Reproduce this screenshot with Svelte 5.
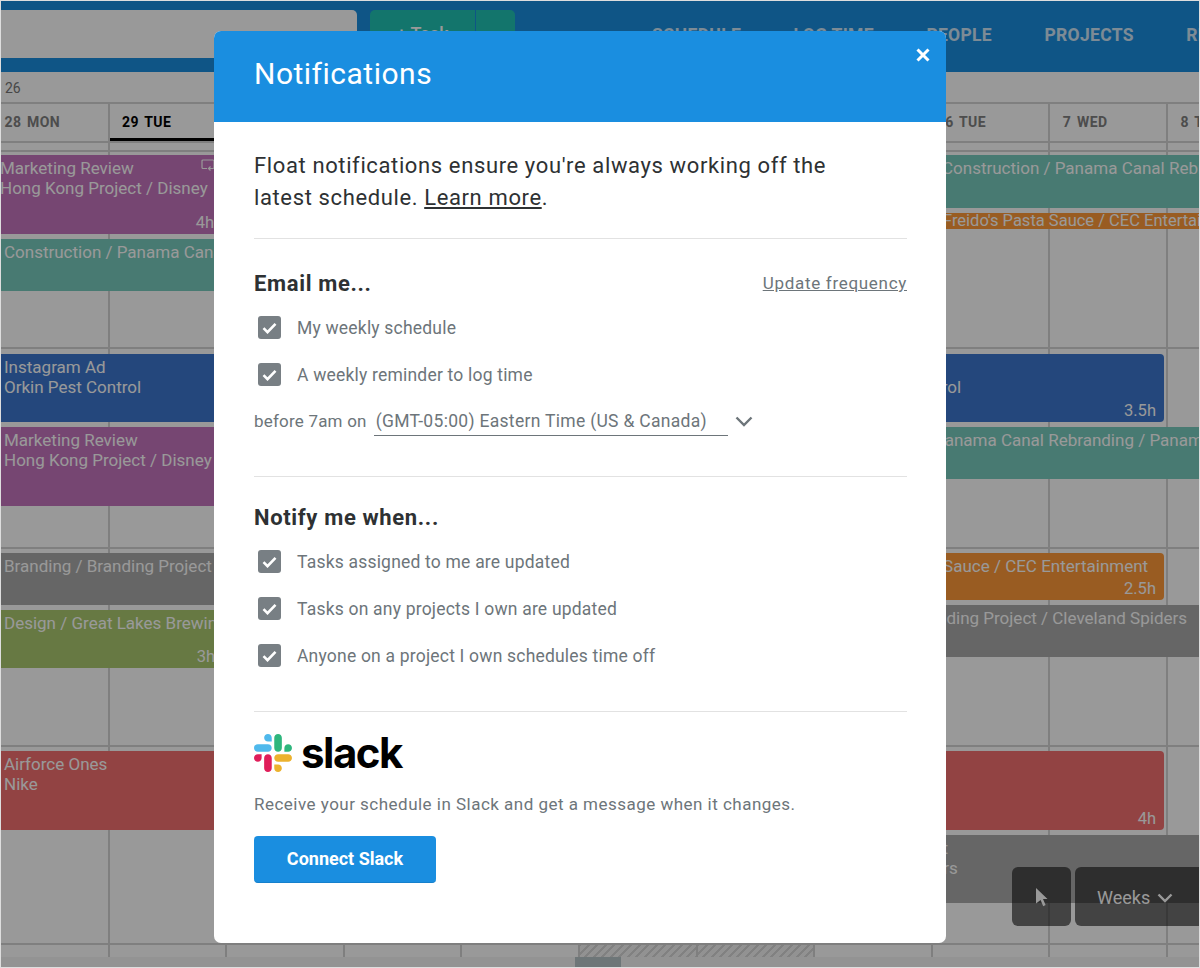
<script>
  const days = ['28 MON', '29 TUE', '30 WED', '1 THU', '2 FRI', '3 SAT', '4 SUN', '5 MON', '6 TUE', '7 WED', '8 THU'];
  const rows = [197, 200, 198, 198];

  // x, y, w, h in page pixels, the board content starts at y 152
  const tasks = [
    { x: 0, y: 155, w: 330, h: 79, c: 'purple', pad: 0, lines: ['Marketing Review', 'Hong Kong Project / Disney'], time: '4h', timeX: 214 },
    { x: 0, y: 239, w: 330, h: 52, c: 'teal', pad: 4, lines: ['Construction / Panama Canal Rebranding'] },
    { x: 0, y: 354, w: 400, h: 68, c: 'blue', pad: 4, lines: ['Instagram Ad', 'Orkin Pest Control'] },
    { x: 0, y: 427, w: 330, h: 79, c: 'purple', pad: 4, lines: ['Marketing Review', 'Hong Kong Project / Disney'] },
    { x: 0, y: 553, w: 330, h: 52, c: 'gray', pad: 4, lines: ['Branding / Branding Project / Cleveland'] },
    { x: 0, y: 610, w: 330, h: 58, c: 'green', pad: 4, lines: ['Design / Great Lakes Brewing Co'], time: '3h', timeX: 215 },
    { x: 0, y: 751, w: 330, h: 79, c: 'red', pad: 4, lines: ['Airforce Ones', 'Nike'] },
    { x: 930, y: 155, w: 270, h: 53, c: 'teal', pad: 12, lines: ['Construction / Panama Canal Rebranding'] },
    { x: 930, y: 213, w: 270, h: 16, c: 'orange', pad: 13, lines: ["Freido's Pasta Sauce / CEC Entertainment"], small: true },
    { x: 800, y: 354, w: 364, h: 68, c: 'blue', end: true, pad: 24, lines: ['', 'Orkin Pest Control'], time: '3.5h', timeX: 1156 },
    { x: 800, y: 427, w: 400, h: 52, c: 'teal', pad: 134, lines: ['Panama Canal Rebranding / Panama Canal'] },
    { x: 800, y: 553, w: 364, h: 47, c: 'orange', end: true, pad: 34, lines: ["Freido's Pasta Sauce / CEC Entertainment"], time: '2.5h', timeX: 1156 },
    { x: 800, y: 605, w: 400, h: 52, c: 'gray', pad: 29, lines: ['Branding / Branding Project / Cleveland Spiders'] },
    { x: 800, y: 751, w: 364, h: 79, c: 'red', end: true, pad: 4, lines: ['Airforce Ones', 'Nike'], time: '4h', timeX: 1156 },
    { x: 800, y: 835, w: 400, h: 68, c: 'gray', pad: 23, lines: ['Branding Project', 'Cleveland Spiders'] }
  ];

  const emailItems = ['My weekly schedule', 'A weekly reminder to log time'];
  const notifyItems = [
    'Tasks assigned to me are updated',
    'Tasks on any projects I own are updated',
    'Anyone on a project I own schedules time off'
  ];
</script>

<div class="page">
  <header class="topbar">
    <div class="search"></div>
    <div class="add">
      <span class="add-main">+ Task</span>
      <span class="add-more"></span>
    </div>
    <nav class="nav">
      <span>SCHEDULE</span>
      <span>LOG TIME</span>
      <span>PEOPLE</span>
      <span>PROJECTS</span>
      <span>REPORT</span>
    </nav>
  </header>

  <div class="months">26</div>

  <div class="days">
    {#each days as d, i}
      <div class="day" class:active={i === 1}>{d}</div>
    {/each}
  </div>

  <div class="spacer">
    {#each days as d}<i></i>{/each}
  </div>

  <div class="board">
    <div class="cols">
      {#each days as d, i}
        <div class="col" class:off={i === 5 || i === 6}></div>
      {/each}
    </div>
    <div class="rows">
      {#each rows as h}
        <div class="row" style="height:{h}px"></div>
      {/each}
    </div>

    {#each tasks as t}
      <div
        class="task {t.c}"
        class:end={t.end}
        style="left:{t.x - 1}px;top:{t.y - 152}px;width:{t.w}px;height:{t.h}px;padding-left:{t.pad}px"
      >
        {#each t.lines as line}
          <div class="line" class:small={t.small}>{line || '\u00a0'}</div>
        {/each}
        {#if t.time}
          <span class="time" style="left:{t.timeX - t.x - 60}px">{t.time}</span>
        {/if}
      </div>
    {/each}

    <svg class="repeat" width="14" height="13" viewBox="0 0 14 13" fill="none" stroke="#fff" stroke-width="1.2">
      <path d="M6 9.5H2a1 1 0 0 1-1-1V2a1 1 0 0 1 1-1h10a1 1 0 0 1 1 1v6.5a1 1 0 0 1-1 1H7.5" />
      <path d="M9.5 7.5l-2 2 2 2" />
    </svg>
  </div>

  <div class="scrollbar"><span></span></div>

  <div class="tools">
    <div class="tool pointer">
      <svg width="12" height="19" viewBox="0 0 12 19"><path d="M0 0l11.5 11H7l2.6 6-2.4 1.2L4.6 12 0 15.5z" fill="#fff" /></svg>
    </div>
    <div class="tool weeks">
      Weeks
      <svg width="16" height="10" viewBox="0 0 16 10" fill="none" stroke="#fff" stroke-width="2.4"><path d="M1.5 1.5L8 8l6.5-6.5" /></svg>
    </div>
  </div>

  <div class="overlay"></div>

  <section class="modal">
    <div class="modal-head">
      <h1>Notifications</h1>
      <svg class="close" width="14" height="14" viewBox="0 0 14 14" stroke="#fff" stroke-width="3"><path d="M1.5 1.5l11 11M12.5 1.5l-11 11" /></svg>
    </div>

    <div class="modal-body">
      <p class="intro">Float notifications ensure you're always working off the latest schedule. <u>Learn more</u>.</p>

      <hr />

      <div class="title-row">
        <h2>Email me...</h2>
        <span class="freq">Update frequency</span>
      </div>
      <ul class="checks">
        {#each emailItems as item}
          <li>
            <span class="box"><svg width="15" height="12" viewBox="0 0 15 12" fill="none" stroke="#fff" stroke-width="2.6"><path d="M1.5 6.2l4 4 8-8.4" /></svg></span>
            {item}
          </li>
        {/each}
      </ul>
      <div class="before">
        <span>before 7am on</span>
        <span class="zone">(GMT-05:00) Eastern Time (US &amp; Canada)</span>
        <svg width="18" height="11" viewBox="0 0 18 11" fill="none" stroke="#6d757a" stroke-width="2.4"><path d="M1.5 1.5L9 9l7.5-7.5" /></svg>
      </div>

      <hr class="gap" />

      <h2 class="notify">Notify me when...</h2>
      <ul class="checks">
        {#each notifyItems as item}
          <li>
            <span class="box"><svg width="15" height="12" viewBox="0 0 15 12" fill="none" stroke="#fff" stroke-width="2.6"><path d="M1.5 6.2l4 4 8-8.4" /></svg></span>
            {item}
          </li>
        {/each}
      </ul>

      <hr class="gap" />

      <div class="slack">
        <svg width="38" height="38" viewBox="0 0 2447.6 2452.5">
          <path fill="#4fb9ec" d="M897.4 0c-135.3.1-244.8 109.9-244.7 245.2-.1 135.3 109.5 245.1 244.8 245.2h244.8V245.3c.1-135.3-109.5-245.1-244.9-245.3.1 0 .1 0 0 0m0 654H244.8C109.5 654.1-.1 763.9 0 899.2c-.2 135.3 109.4 245.1 244.7 245.3h652.7c135.3-.1 244.9-109.9 244.8-245.2.1-135.4-109.5-245.2-244.8-245.3z" />
          <path fill="#2eb67d" d="M2447.6 899.2c.1-135.3-109.5-245.1-244.8-245.2-135.3.1-244.9 109.9-244.8 245.2v245.3h244.8c135.3-.1 244.9-109.9 244.8-245.3zm-652.7 0V245.2C1795 110 1685.5.2 1550.2 0c-135.3.1-244.9 109.9-244.8 245.2v654c-.2 135.3 109.4 245.1 244.7 245.3 135.3-.1 244.9-109.9 244.8-245.3z" />
          <path fill="#ecb22e" d="M1550.1 2452.5c135.3-.1 244.9-109.9 244.8-245.2.1-135.3-109.5-245.1-244.8-245.2h-244.8v245.2c-.1 135.2 109.5 245 244.8 245.2zm0-654.1h652.7c135.3-.1 244.9-109.9 244.8-245.2.2-135.3-109.4-245.1-244.7-245.3h-652.7c-135.3.1-244.9 109.9-244.8 245.2-.1 135.4 109.4 245.2 244.7 245.3z" />
          <path fill="#e01e5a" d="M0 1553.2c-.1 135.3 109.5 245.1 244.8 245.2 135.3-.1 244.9-109.9 244.8-245.2V1308h-244.8C109.5 1308.1-.1 1417.9 0 1553.2zm652.7 0v654c-.2 135.3 109.4 245.1 244.7 245.3 135.3-.1 244.9-109.9 244.8-245.2v-653.9c.2-135.3-109.4-245.1-244.7-245.3-135.4 0-244.9 109.8-244.8 245.1 0 0 0 0 0 0z" />
        </svg>
        <span class="slack-word">slack</span>
      </div>
      <p class="slack-text">Receive your schedule in Slack and get a message when it changes.</p>
      <button class="connect">Connect Slack</button>
    </div>
  </section>
</div>

<style>
  :global(body) { margin: 0; }

  .page {
    position: relative;
    width: 1200px;
    height: 968px;
    box-sizing: border-box;
    border: 1px solid #dedede;
    overflow: hidden;
    background: #fff;
    font-family: Roboto, "Liberation Sans", sans-serif;
    color: #555;
  }

  .topbar {
    display: flex;
    height: 71px;
    background: #1a8ee0;
    padding: 9px 0 0 0;
    box-sizing: border-box;
    color: #fff;
  }
  .search { flex: none; width: 356px; height: 48px; background: #fff; border-radius: 0 5px 5px 0; }
  .add { flex: none; display: flex; margin-left: 13px; gap: 1px; }
  .add-main, .add-more { background: #20c4b4; height: 48px; line-height: 48px; text-align: center; font-size: 18px; font-weight: 500; }
  .add-main { width: 105px; border-radius: 5px 0 0 5px; }
  .add-more { width: 39px; border-radius: 0 5px 5px 0; }
  .nav { display: flex; gap: 52.5px; margin-left: 137px; font-size: 17.5px; font-weight: 700; letter-spacing: .3px; line-height: 50px; opacity: .8; white-space: nowrap; }

  .months { height: 30px; line-height: 32px; padding-left: 4px; font-size: 14px; color: #777; box-sizing: border-box; }

  .days, .spacer { display: flex; margin-left: -9px; border-top: 2px solid #d4d4d4; box-sizing: border-box; }
  .days { height: 39px; }
  .day {
    flex: 0 0 117.6px;
    box-sizing: border-box;
    padding: 10px 0 0 12.5px;
    border-right: 2px solid #d4d4d4;
    font-size: 14px;
    font-weight: 700;
    letter-spacing: .35px;
    word-spacing: 2px;
    color: #808080;
    white-space: nowrap;
    position: relative;
  }
  .day.active { color: #000; }
  .day.active::after { content: ''; position: absolute; left: 0; right: 0; bottom: 0; height: 3px; background: #000; }

  .spacer { height: 9px; }
  .spacer i { flex: 0 0 117.6px; box-sizing: border-box; border-right: 2px solid #d4d4d4; }

  .board { position: relative; height: 807px; border-top: 2px solid #d4d4d4; box-sizing: border-box; overflow: hidden; }
  .cols { position: absolute; inset: 0 0 0 -9px; display: flex; }
  .col { flex: 0 0 117.6px; box-sizing: border-box; border-right: 2px solid #d4d4d4; }
  .col.off {
    background: repeating-linear-gradient(135deg, #d8d8d8 0 2px, #f4f4f4 2px 6px);
    background-size: 100% 13px;
    background-position: 0 792px;
    background-repeat: no-repeat;
  }
  .rows { position: absolute; inset: 0; }
  .row { border-bottom: 2px solid #d4d4d4; box-sizing: border-box; }

  .task {
    position: absolute;
    box-sizing: border-box;
    color: #fff;
    font-size: 17px;
    line-height: 20px;
    padding-top: 3px;
    white-space: nowrap;
    overflow: hidden;
  }
  .task.end { border-radius: 0 4px 4px 0; }
  .line.small { line-height: 16px; margin-top: -3px; font-size: 16.5px; }
  .time { position: absolute; bottom: 1px; width: 60px; text-align: right; font-size: 16.5px; }
  .purple { background: #c575be; }
  .teal { background: #78cbbe; }
  .blue { background: #3c77cf; }
  .orange { background: #ff9a39; }
  .gray { background: #aaa; }
  .green { background: #acca70; }
  .red { background: #f37171; }

  .repeat { position: absolute; left: 200px; top: 7px; }

  .scrollbar { height: 10px; background: #f6f6f6; position: relative; }
  .scrollbar span { position: absolute; left: 574px; top: 0; width: 46px; height: 10px; background: #b8c5c8; }

  .tools { position: absolute; left: 1011px; top: 866px; display: flex; gap: 4px; }
  .tool {
    height: 59px;
    background: rgba(10, 10, 10, .58);
    border-radius: 6px;
    color: #fff;
    font-size: 18px;
    display: flex;
    align-items: center;
    justify-content: center;
    padding-top: 2px;
    box-sizing: border-box;
  }
  .pointer { width: 59px; }
  .weeks { width: 130px; gap: 7px; justify-content: flex-start; padding-left: 22px; }

  .overlay { position: absolute; inset: -1px; background: rgba(0, 0, 0, .4); }

  .modal {
    position: absolute;
    left: 213px;
    top: 30px;
    width: 732px;
    height: 912px;
    background: #fff;
    border-radius: 7px;
    overflow: hidden;
  }
  .modal-head {
    position: relative;
    height: 91px;
    box-sizing: border-box;
    background: #1a8ee0;
    display: flex;
    align-items: center;
    padding: 0 40px 6px;
  }
  h1 { margin: 0; font-size: 30px; font-weight: 400; color: #fff; letter-spacing: .5px; }
  .close { position: absolute; top: 17px; right: 16px; }

  .modal-body { padding: 28px 39px 0 40px; }
  .intro { margin: 0; max-width: 590px; font-size: 22px; line-height: 32px; letter-spacing: .62px; color: #2e3133; }
  hr { border: 0; height: 1px; background: #e2e2e2; margin: 24px 0 0; }
  hr.gap { margin-top: 32px; }

  .title-row { display: flex; justify-content: space-between; align-items: center; margin-top: 30px; }
  h2 { margin: 0; font-size: 22px; line-height: 30px; font-weight: 700; letter-spacing: .65px; color: #2e3133; }
  .notify { margin-top: 26px; }
  .freq { font-size: 17px; letter-spacing: .7px; padding-bottom: 2px; color: #6d757a; text-decoration: underline; }

  .checks { list-style: none; margin: 5px 0 0; padding: 0; }
  .checks li { display: flex; align-items: center; height: 47px; font-size: 17.5px; letter-spacing: .2px; color: #6d757a; }
  .box {
    flex: none;
    width: 23px;
    height: 23px;
    margin: 0 16px 0 4px;
    background: #787f84;
    border-radius: 3px;
    display: flex;
    align-items: center;
    justify-content: center;
  }

  .before { display: flex; align-items: center; height: 46px; font-size: 17px; letter-spacing: .2px; color: #6d757a; }
  .zone { width: 354px; box-sizing: border-box; margin-left: 7px; padding: 0 0 4px 2px; border-bottom: 1px solid #6d757a; font-size: 17.5px; letter-spacing: .3px; position: relative; top: 2px; }
  .before svg { margin-left: 7px; }

  .slack { display: flex; align-items: center; margin-top: 21px; height: 39px; gap: 9px; }
  .slack-word { font-family: Inter, sans-serif; font-weight: 700; font-size: 42px; letter-spacing: -1.5px; color: #000; line-height: 39px; }
  .slack-text { margin: 20px 0 0; font-size: 17px; line-height: 24px; letter-spacing: .48px; color: #6d757a; }
  .connect {
    display: block;
    margin-top: 20px;
    width: 182px;
    height: 47px;
    padding: 0 0 2px;
    border: 0;
    border-bottom: 1px solid #1580cc;
    border-radius: 4px;
    background: #1a8ee0;
    color: #fff;
    font-family: inherit;
    font-size: 18px;
    font-weight: 700;
  }
</style>
